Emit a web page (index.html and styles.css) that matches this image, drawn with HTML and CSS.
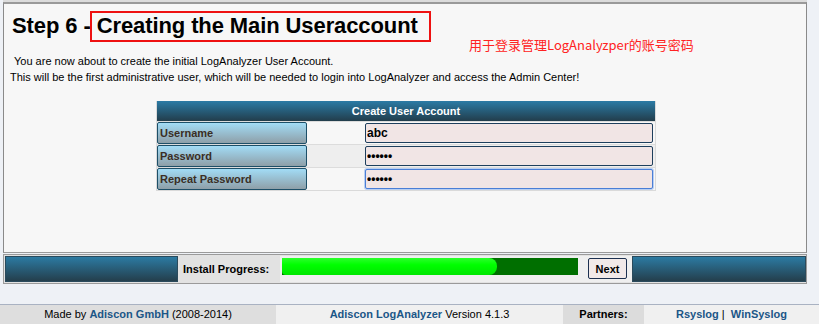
FILE: index.html
```html
<!DOCTYPE html>
<html lang="en">
<head>
    <meta charset="UTF-8">
    <meta name="viewport" content="width=device-width, initial-scale=1.0">
    <title>LogAnalyzer Installation - Step 6</title>
    <link rel="stylesheet" href="styles.css">
</head>
<body>
    <div class="top-strip"></div>
    <div class="install">
        <div class="panel">
            <h1 class="step-title">Step 6 - <span class="mark">Creating the Main Useraccount</span></h1>
            <div class="note">用于登录管理LogAnalyzper的账号密码</div>
            <p class="intro">
                <span class="first">You are now about to create the initial LogAnalyzer User Account.</span><br>
                This will be the first administrative user, which will be needed to login into LogAnalyzer and access the Admin Center!
            </p>

            <div class="form-table">
                <div class="form-head">Create User Account</div>
                <div class="form-row">
                    <div class="label">Username</div>
                    <div class="gap"></div>
                    <div class="field"><input class="text-input" type="text" value="abc"></div>
                </div>
                <div class="form-row alt">
                    <div class="label">Password</div>
                    <div class="gap"></div>
                    <div class="field"><input class="text-input" type="password" value="123456"></div>
                </div>
                <div class="form-row">
                    <div class="label">Repeat Password</div>
                    <div class="gap"></div>
                    <div class="field"><input class="text-input focused" type="password" value="123456"></div>
                </div>
            </div>
        </div>

        <div class="progress-row">
            <div class="cap left"></div>
            <div class="progress-label">Install Progress:</div>
            <div class="progress-cell">
                <div class="meter">
                    <div class="meter-fill" style="width: 72.6%"></div>
                </div>
            </div>
            <div class="next-cell"><button class="next-btn">Next</button></div>
            <div class="cap right"></div>
        </div>
    </div>

    <div class="footer">
        <div class="foot-cell made">Made by <b>Adiscon GmbH</b> (2008-2014)</div>
        <div class="foot-cell version"><b>Adiscon LogAnalyzer</b> Version 4.1.3</div>
        <div class="foot-cell partners">Partners:</div>
        <div class="foot-cell links"><b>Rsyslog</b> | &nbsp;<b>WinSyslog</b></div>
    </div>
</body>
</html>
```

FILE: styles.css
```css
body {
    margin: 0;
    background-color: #eef1f6;
    font-family: "Liberation Sans", Arial, sans-serif;
    font-size: 11px;
    color: #000;
}

.top-strip {
    width: 804px;
    margin-left: 3px;
    height: 2px;
    background-color: #dcdcdc;
}

.install {
    width: 804px;
    margin-left: 3px;
}

.panel {
    height: 248px;
    background-color: #f7f7f7;
    border-top: 2px solid #9a9a9a;
    border-left: 1px solid #8a8a8a;
    border-right: 1px solid #8a8a8a;
    border-bottom: 1px solid #9a9a9a;
    position: relative;
}

.step-title {
    margin: 0;
    padding: 8px 0 0 8px;
    font-size: 22px;
    line-height: 28px;
    font-weight: bold;
    letter-spacing: -0.1px;
}

.mark {
    position: relative;
}

.mark::after {
    content: "";
    position: absolute;
    left: -7px;
    right: -13px;
    top: -2px;
    bottom: -4px;
    border: 2px solid #ee1111;
}

.note {
    position: absolute;
    left: 465px;
    top: 31px;
    font-family: "Noto Sans CJK SC", sans-serif;
    font-size: 13px;
    color: #ff2222;
}

.intro {
    margin: 13px 0 0 6px;
    line-height: 16px;
}

.intro .first {
    padding-left: 4px;
}

.form-table {
    width: 498px;
    margin: 16px 0 0 152px;
    border: 1px solid #dadada;
    border-top: none;
}

.form-head {
    height: 20px;
    line-height: 20px;
    text-align: center;
    color: #fff;
    font-weight: bold;
    background: linear-gradient(#2b7ba5, #223d4b);
}

.form-row {
    display: flex;
    height: 22px;
    border-top: 1px solid #dcdcdc;
    background-color: #f7f7f7;
}

.form-row.alt {
    background-color: #eeeeee;
}

.label {
    box-sizing: border-box;
    width: 150px;
    padding-left: 2px;
    border: 1px solid #1d4f68;
    border-radius: 2px;
    background: linear-gradient(#a2dcf6, #8e9fa8);
    color: #3a2e24;
    font-weight: bold;
    line-height: 20px;
}

.gap {
    width: 58px;
}

.field {
    flex: 1;
    display: flex;
    align-items: center;
    padding-right: 2px;
}

.text-input {
    box-sizing: border-box;
    width: 100%;
    height: 20px;
    padding: 0 1px;
    border: 1px solid #1e3f5d;
    border-radius: 2px;
    background-color: #f1e5e5;
    font-family: "Liberation Sans", Arial, sans-serif;
    font-size: 12px;
    font-weight: bold;
    color: #000;
    outline: none;
}

.text-input.focused {
    border-color: #4a7ed6;
    box-shadow: 0 0 0 1px #b9cff2;
}

.progress-row {
    display: flex;
    height: 26px;
    margin-top: 1px;
    padding: 1px 0;
    border: 1px solid #9a9a9a;
    background-color: #e2e2e2;
}

.cap {
    box-sizing: border-box;
    border: 1px solid #2a4a5c;
    background: linear-gradient(#2c7aa2, #243e4c);
}

.cap.left {
    width: 173px;
    margin-left: 1px;
}

.cap.right {
    width: 174px;
}

.progress-label {
    width: 97px;
    padding-left: 5px;
    line-height: 26px;
    font-weight: bold;
}

.progress-cell {
    width: 296px;
    padding: 2px 2px 0 2px;
    background-color: #efefef;
}

.meter {
    height: 17px;
    background-color: #006f00;
}

.meter-fill {
    height: 100%;
    border-radius: 0 8px 8px 4px;
    background: linear-gradient(#2cff2c, #00ff00 40%, #00e600);
}

.next-cell {
    width: 44px;
    padding-left: 8px;
    padding-top: 2px;
    background-color: #efefef;
}

.next-btn {
    width: 39px;
    height: 21px;
    padding: 0;
    border: 1px solid #1c3050;
    border-radius: 2px;
    background-color: #f1e9e9;
    font-family: "Liberation Sans", Arial, sans-serif;
    font-size: 11px;
    font-weight: bold;
    color: #000;
}

.footer {
    display: flex;
    margin-top: 20px;
    height: 19px;
    border-top: 1px solid #a9b2c2;
    border-bottom: 2px solid #2b4f7e;
}

.foot-cell {
    line-height: 19px;
    text-align: center;
    background-color: #f0f0f0;
}

.foot-cell b {
    color: #1b5687;
}

.made {
    width: 276px;
    background-color: #dedede;
}

.version {
    width: 287px;
}

.partners {
    width: 81px;
    font-weight: bold;
    background-color: #dcdcdc;
}

.links {
    flex: 1;
}
```
